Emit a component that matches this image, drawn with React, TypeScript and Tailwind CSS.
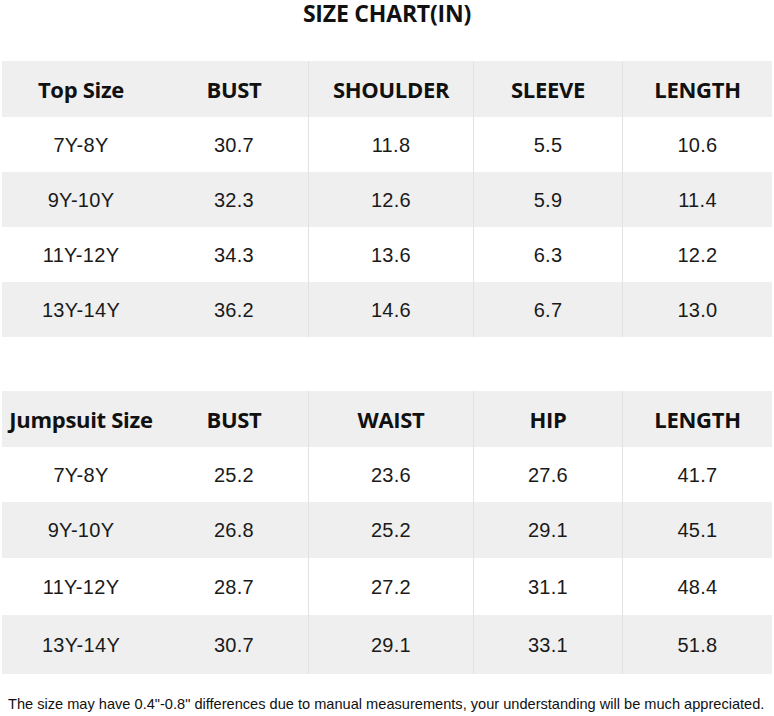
const topRows = [
  ["7Y-8Y", "30.7", "11.8", "5.5", "10.6"],
  ["9Y-10Y", "32.3", "12.6", "5.9", "11.4"],
  ["11Y-12Y", "34.3", "13.6", "6.3", "12.2"],
  ["13Y-14Y", "36.2", "14.6", "6.7", "13.0"],
];

const jumpRows = [
  ["7Y-8Y", "25.2", "23.6", "27.6", "41.7"],
  ["9Y-10Y", "26.8", "25.2", "29.1", "45.1"],
  ["11Y-12Y", "28.7", "27.2", "31.1", "48.4"],
  ["13Y-14Y", "30.7", "29.1", "33.1", "51.8"],
];

const widths = ["w-[158px]", "w-[148px]", "w-[165px]", "w-[149px]", "w-[150px]"];

const Row = ({ cells, head, gray, h }: { cells: string[]; head?: boolean; gray?: boolean; h: string }) => (
  <div className={`flex ${h} ${gray ? "bg-[#efefef]" : "bg-white"}`}>
    {cells.map((c, i) => (
      <div
        key={i}
        className={`${widths[i]} flex items-center justify-center ${i >= 2 ? "border-l border-[#e2e2e2]" : ""} ${
          head
            ? "font-['Open_Sans',sans-serif] font-bold text-[22px] text-[#111] tracking-[-0.3px]"
            : "font-['Liberation_Sans',Arial,sans-serif] text-[20px] text-[#1a1a1a] tracking-[0.3px]"
        }`}
      >
        {c}
      </div>
    ))}
  </div>
);

const SizeTable = ({ head, rows, heights }: { head: string[]; rows: string[][]; heights: string[] }) => (
  <div className="ml-[2px] w-[770px] flex flex-col">
    <Row cells={head} head gray h="h-[56px]" />
    {rows.map((r, i) => (
      <Row key={i} cells={r} gray={i % 2 === 1} h={heights[i]} />
    ))}
  </div>
);

const App = () => {
  return (
    <div className="w-[774px] h-[716px] bg-white flex flex-col">
      <div className="h-[26px] text-center leading-[26px] font-['Open_Sans',sans-serif] font-bold text-[23px] text-[#111] tracking-[-0.2px]">
        SIZE CHART(IN)
      </div>
      <div className="h-[35px]" />
      <SizeTable
        head={["Top Size", "BUST", "SHOULDER", "SLEEVE", "LENGTH"]}
        rows={topRows}
        heights={["h-[55px]", "h-[55px]", "h-[55px]", "h-[55px]"]}
      />
      <div className="h-[54px]" />
      <SizeTable
        head={["Jumpsuit Size", "BUST", "WAIST", "HIP", "LENGTH"]}
        rows={jumpRows}
        heights={["h-[55px]", "h-[56px]", "h-[57px]", "h-[59px]"]}
      />
      <div className="flex-1 flex items-center pt-[20px] pl-[8px] whitespace-nowrap font-['Liberation_Sans',Arial,sans-serif] text-[14.6px] text-[#111]">
        The size may have 0.4"-0.8" differences due to manual measurements, your understanding will be much appreciated.
      </div>
    </div>
  );
};

export default App;
